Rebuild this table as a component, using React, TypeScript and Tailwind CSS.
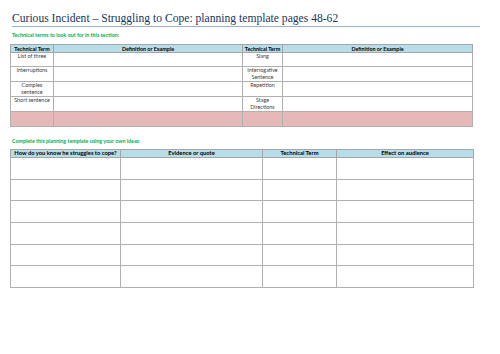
import React from "react";

const body = { fontFamily: "Lato, 'Open Sans', sans-serif" };

export default function App() {
  const t1 = [
    ["List of three", "Slang"],
    ["Interruptions", "Interrogative Sentence"],
    ["Complex sentence", "Repetition"],
    ["Short sentence", "Stage Directions"],
  ];
  return (
    <div className="w-[500px] h-[354px] bg-white relative overflow-hidden" style={body}>
      <div className="pl-[12px] pt-[12px] pr-[20px]">
        <div
          className="text-[11.6px] leading-[13px] text-[#17365d] pb-[1px] border-b border-[#95b3d7]"
          style={{ fontFamily: "'Liberation Serif', 'DejaVu Serif', serif" }}
        >
          Curious Incident – Struggling to Cope: planning template pages 48-62
        </div>
      </div>
      <div className="pl-[12px] mt-[5px] text-[5.3px] leading-[6px] font-bold text-[#00b050]">
        Technical terms to look out for in this section:
      </div>
      <table className="ml-[10px] mt-[6px] w-[462px] table-fixed border-collapse text-[5.4px] leading-[7px] text-[#404040]">
        <colgroup>
          <col className="w-[43px]" />
          <col className="w-[189px]" />
          <col className="w-[40px]" />
          <col className="w-[190px]" />
        </colgroup>
        <thead>
          <tr className="h-[8px] bg-[#b7dde8] font-bold text-black">
            <th className="border border-[#a6a6a6] p-0 align-middle leading-[6px]">Technical Term</th>
            <th className="border border-[#a6a6a6] p-0 align-middle leading-[6px]">Definition or Example</th>
            <th className="border border-[#a6a6a6] p-0 align-middle leading-[6px]">Technical Term</th>
            <th className="border border-[#a6a6a6] p-0 align-middle leading-[6px]">Definition or Example</th>
          </tr>
        </thead>
        <tbody>
          {t1.map((r, i) => (
            <tr key={i} className="h-[14.4px]">
              <td className="border border-[#b0b0b0] p-0 px-[3px] text-center align-top">{r[0]}</td>
              <td className="border border-[#b0b0b0] p-0"></td>
              <td className="border border-[#b0b0b0] p-0 px-[2px] text-center align-top">{r[1]}</td>
              <td className="border border-[#b0b0b0] p-0"></td>
            </tr>
          ))}
          <tr className="h-[14.6px] bg-[#e6b9b8]">
            <td className="border border-[#b0b0b0] p-0"></td>
            <td className="border border-[#b0b0b0] p-0"></td>
            <td className="border border-[#b0b0b0] p-0"></td>
            <td className="border border-[#b0b0b0] p-0"></td>
          </tr>
        </tbody>
      </table>
      <div className="pl-[12px] mt-[11px] text-[5.3px] leading-[6px] font-bold text-[#00b050]">
        Complete this planning template using your own ideas:
      </div>
      <table className="ml-[10px] mt-[5px] w-[463px] table-fixed border-collapse text-[5.8px] leading-[6px] text-black">
        <colgroup>
          <col className="w-[110px]" />
          <col className="w-[142px]" />
          <col className="w-[74px]" />
          <col className="w-[137px]" />
        </colgroup>
        <thead>
          <tr className="h-[8px] bg-[#b7dde8] font-bold">
            <th className="border border-[#a6a6a6] p-0 align-middle">How do you know he struggles to cope?</th>
            <th className="border border-[#a6a6a6] p-0 align-middle">Evidence or quote</th>
            <th className="border border-[#a6a6a6] p-0 align-middle">Technical Term</th>
            <th className="border border-[#a6a6a6] p-0 align-middle">Effect on audience</th>
          </tr>
        </thead>
        <tbody>
          {[0, 1, 2, 3, 4, 5].map((i) => (
            <tr key={i} className="h-[21.7px]">
              <td className="border border-[#b0b0b0] p-0"></td>
              <td className="border border-[#b0b0b0] p-0"></td>
              <td className="border border-[#b0b0b0] p-0"></td>
              <td className="border border-[#b0b0b0] p-0"></td>
            </tr>
          ))}
        </tbody>
      </table>
    </div>
  );
}
